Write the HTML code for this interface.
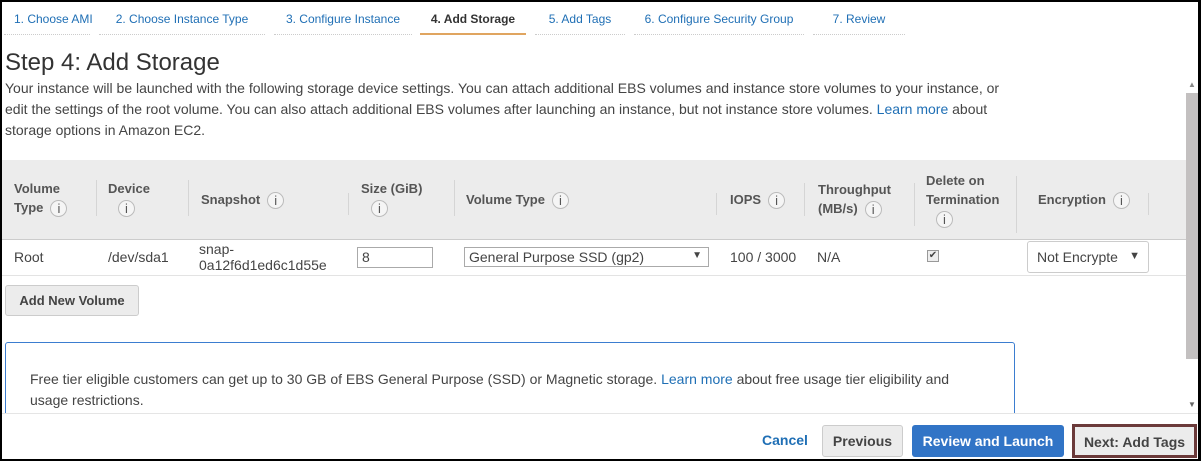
<!DOCTYPE html>
<html><head><style>
*{box-sizing:border-box;margin:0;padding:0}
body{width:1201px;height:461px;overflow:hidden;background:#fff;font-family:"Liberation Sans",Arial,sans-serif;color:#444;position:relative}
.frame{position:absolute;inset:0;border:2px solid #000;border-right-width:3px;border-bottom-width:2px;pointer-events:none;z-index:10}
.tab{position:absolute;top:12px;font-size:12px;color:#1f6fb5;height:23px;border-bottom:1px dotted #ccc;text-align:center;white-space:nowrap}
.tab.on{color:#333;font-weight:bold;border-bottom:2px solid #e0a560}
h1{position:absolute;left:5px;top:49px;font-size:24px;font-weight:normal;color:#333}
.desc{position:absolute;left:5px;top:78px;width:1000px;font-size:14px;line-height:21px;color:#444}
a{color:#1f6fb5;text-decoration:none}
.thead{position:absolute;left:2px;top:160px;width:1184px;height:80px;background:#ececec;border-bottom:1px solid #ccc}
.th{position:absolute;font-size:13px;font-weight:bold;color:#555;line-height:19px;white-space:nowrap}
.sep{position:absolute;width:1px;background:#d5d5d5}
.i{display:inline-block;width:17px;height:17px;border:1px solid #bbb;border-radius:50%;font-size:13px;line-height:15px;text-align:center;font-weight:normal;color:#555;background:#f5f5f5;vertical-align:middle;margin-left:7px}
.td{position:absolute;font-size:14px;color:#444}
.row{position:absolute;left:2px;top:275px;width:1184px;border-top:1px solid #e3e3e3}
.btn{position:absolute;font-size:13px;font-weight:bold;border-radius:3px;text-align:center}
.scroll{position:absolute;left:1186px;top:77px;width:12px;height:336px;background:#fff}
</style></head><body>
<div class="tab" style="left:4px;width:86px;padding-left:10px;text-align:left">1. Choose AMI</div>
<div class="tab" style="left:99px;width:166px">2. Choose Instance Type</div>
<div class="tab" style="left:274px;width:138px">3. Configure Instance</div>
<div class="tab on" style="left:420px;width:106px">4. Add Storage</div>
<div class="tab" style="left:535px;width:90px">5. Add Tags</div>
<div class="tab" style="left:634px;width:170px">6. Configure Security Group</div>
<div class="tab" style="left:813px;width:92px">7. Review</div>
<h1>Step 4: Add Storage</h1>
<div class="desc">Your instance will be launched with the following storage device settings. You can attach additional EBS volumes and instance store volumes to your instance, or edit the settings of the root volume. You can also attach additional EBS volumes after launching an instance, but not instance store volumes. <a>Learn more</a> about storage options in Amazon EC2.</div>
<div class="thead">
<div class="th" style="left:12px;top:19px">Volume<br>Type<span class="i">i</span></div>
<div class="sep" style="left:94px;top:20px;height:36px"></div>
<div class="th" style="left:106px;top:19px">Device<br><span class="i" style="margin-left:10px">i</span></div>
<div class="sep" style="left:186px;top:20px;height:36px"></div>
<div class="th" style="left:199px;top:30px">Snapshot<span class="i">i</span></div>
<div class="sep" style="left:346px;top:33px;height:22px"></div>
<div class="th" style="left:359px;top:19px">Size (GiB)<br><span class="i" style="margin-left:10px">i</span></div>
<div class="sep" style="left:452px;top:20px;height:36px"></div>
<div class="th" style="left:464px;top:30px">Volume Type<span class="i">i</span></div>
<div class="sep" style="left:714px;top:33px;height:22px"></div>
<div class="th" style="left:728px;top:30px">IOPS<span class="i">i</span></div>
<div class="sep" style="left:802px;top:23px;height:33px"></div>
<div class="th" style="left:816px;top:20px">Throughput<br>(MB/s)<span class="i">i</span></div>
<div class="sep" style="left:912px;top:23px;height:43px"></div>
<div class="th" style="left:924px;top:11px">Delete on<br>Termination<br><span class="i" style="margin-left:10px">i</span></div>
<div class="sep" style="left:1014px;top:16px;height:57px"></div>
<div class="th" style="left:1036px;top:30px">Encryption<span class="i">i</span></div>
<div class="sep" style="left:1146px;top:33px;height:22px"></div>
</div>
<div class="td" style="left:14px;top:249px">Root</div>
<div class="td" style="left:108px;top:249px">/dev/sda1</div>
<div class="td" style="left:199px;top:241px;line-height:16px">snap-<br>0a12f6d1ed6c1d55e</div>
<div class="td" style="left:357px;top:247px;width:76px;height:21px;border:1px solid #aaa;padding:1px 4px;font-size:14px">8</div>
<div class="td" style="left:464px;top:247px;width:245px;height:20px;border:1px solid #aaa;padding:1px 4px;font-size:14px">General Purpose SSD (gp2)<span style="position:absolute;right:6px;top:2px;font-size:10px">▼</span></div>
<div class="td" style="left:730px;top:249px">100 / 3000</div>
<div class="td" style="left:817px;top:249px">N/A</div>
<div class="td" style="left:927px;top:250px;width:12px;height:12px;border:1px solid #999;background:#eee;font-size:10px;line-height:10px;text-align:center">✔</div>
<div class="td" style="left:1027px;top:241px;width:122px;height:32px;border:1px solid #ccc;border-radius:3px;padding:7px 9px">Not Encrypte<span style="position:absolute;right:8px;top:8px;font-size:11px">▼</span></div>
<div class="row"></div>
<div class="btn" style="left:5px;top:285px;width:134px;height:31px;line-height:29px;background:#ececec;border:1px solid #ccc;color:#444">Add New Volume</div>
<div style="position:absolute;left:5px;top:342px;width:1010px;height:80px;border:1px solid #3b7dd0;border-radius:3px;background:#fff"></div>
<div class="td" style="left:30px;top:369px;width:940px;line-height:21px;font-size:14px">Free tier eligible customers can get up to 30 GB of EBS General Purpose (SSD) or Magnetic storage. <a>Learn more</a> about free usage tier eligibility and usage restrictions.</div>
<div style="position:absolute;left:2px;top:413px;width:1196px;height:46px;background:#fff;border-top:1px solid #e5e5e5"></div>
<div class="scroll"><div style="position:absolute;top:3px;left:2px;font-size:8px;color:#888">▲</div><div style="position:absolute;top:16px;left:0;width:12px;height:266px;background:#c3c0c0"></div><div style="position:absolute;top:323px;left:2px;font-size:8px;color:#666">▼</div></div>
<div class="btn" style="left:762px;top:432px;color:#1f6fb5;font-size:14px">Cancel</div>
<div class="btn" style="left:822px;top:425px;width:81px;height:32px;line-height:30px;background:#ececec;border:1px solid #ccc;color:#444;font-size:14px">Previous</div>
<div class="btn" style="left:912px;top:425px;width:152px;height:32px;line-height:32px;background:#3174c6;color:#fff;font-size:14px">Review and Launch</div>
<div class="btn" style="left:1072px;top:424px;width:125px;height:34px;line-height:30px;background:#ececec;border:3px solid #6b3a3a;border-radius:0;color:#444;font-size:14px">Next: Add Tags</div>
<div class="frame"></div>
</body></html>
